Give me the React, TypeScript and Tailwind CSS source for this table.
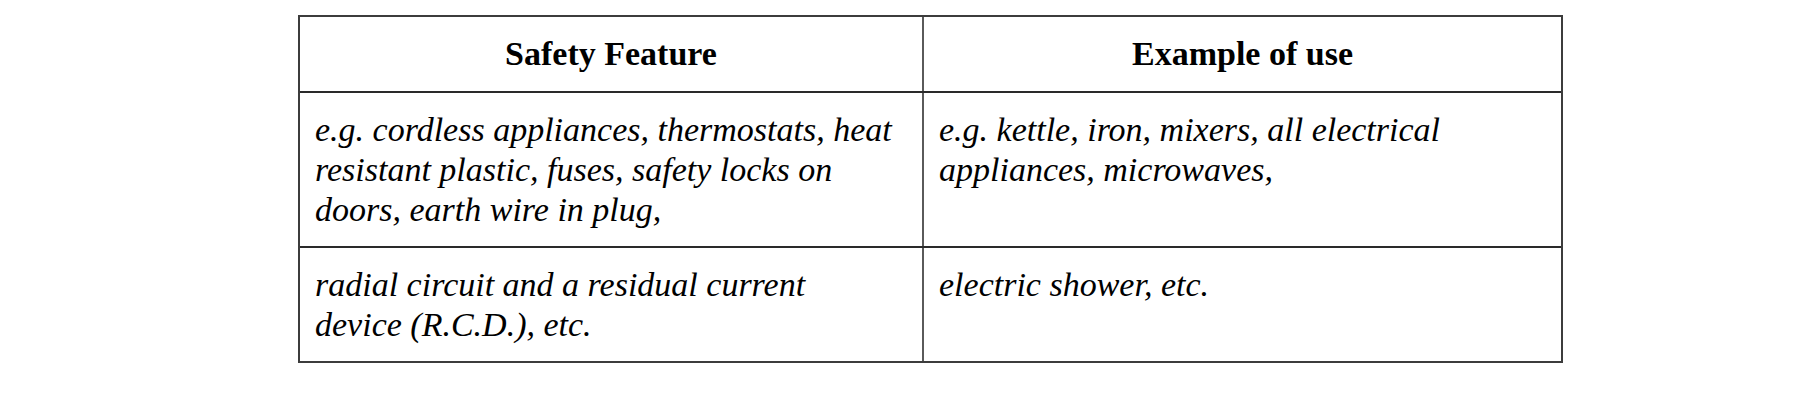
import React from "react";

const serif = { fontFamily: '"Liberation Serif", "Times New Roman", serif' };

export default function App() {
  return (
    <div className="w-[1818px] h-[409px] bg-white pl-[298px] pt-[15px]" style={serif}>
      <div className="w-[1265px] border-2 border-[#3c3c3c] text-black text-[34px] leading-[40px]">
        <div className="grid grid-cols-[624px_637px] h-[76px] border-b-2 border-[#2a2a2a]">
          <div className="border-r-2 border-[#5a5a5a] flex justify-center pt-[17px] font-bold">Safety Feature</div>
          <div className="flex justify-center pt-[17px] font-bold">Example of use</div>
        </div>
        <div className="grid grid-cols-[624px_637px] h-[155px] border-b-2 border-[#2a2a2a]">
          <div className="border-r-2 border-[#5a5a5a] pt-[17px] pl-[15px] pr-[10px] italic">
            e.g. cordless appliances, thermostats, heat resistant plastic, fuses, safety locks on doors, earth wire in plug,
          </div>
          <div className="pt-[17px] pl-[15px] pr-[80px] italic">
            e.g. kettle, iron, mixers, all electrical appliances, microwaves,
          </div>
        </div>
        <div className="grid grid-cols-[624px_637px] h-[113px]">
          <div className="border-r-2 border-[#5a5a5a] pt-[17px] pl-[15px] pr-[60px] italic">
            radial circuit and a residual current device (R.C.D.), etc.
          </div>
          <div className="pt-[17px] pl-[15px] pr-[10px] italic">electric shower, etc.</div>
        </div>
      </div>
    </div>
  );
}
